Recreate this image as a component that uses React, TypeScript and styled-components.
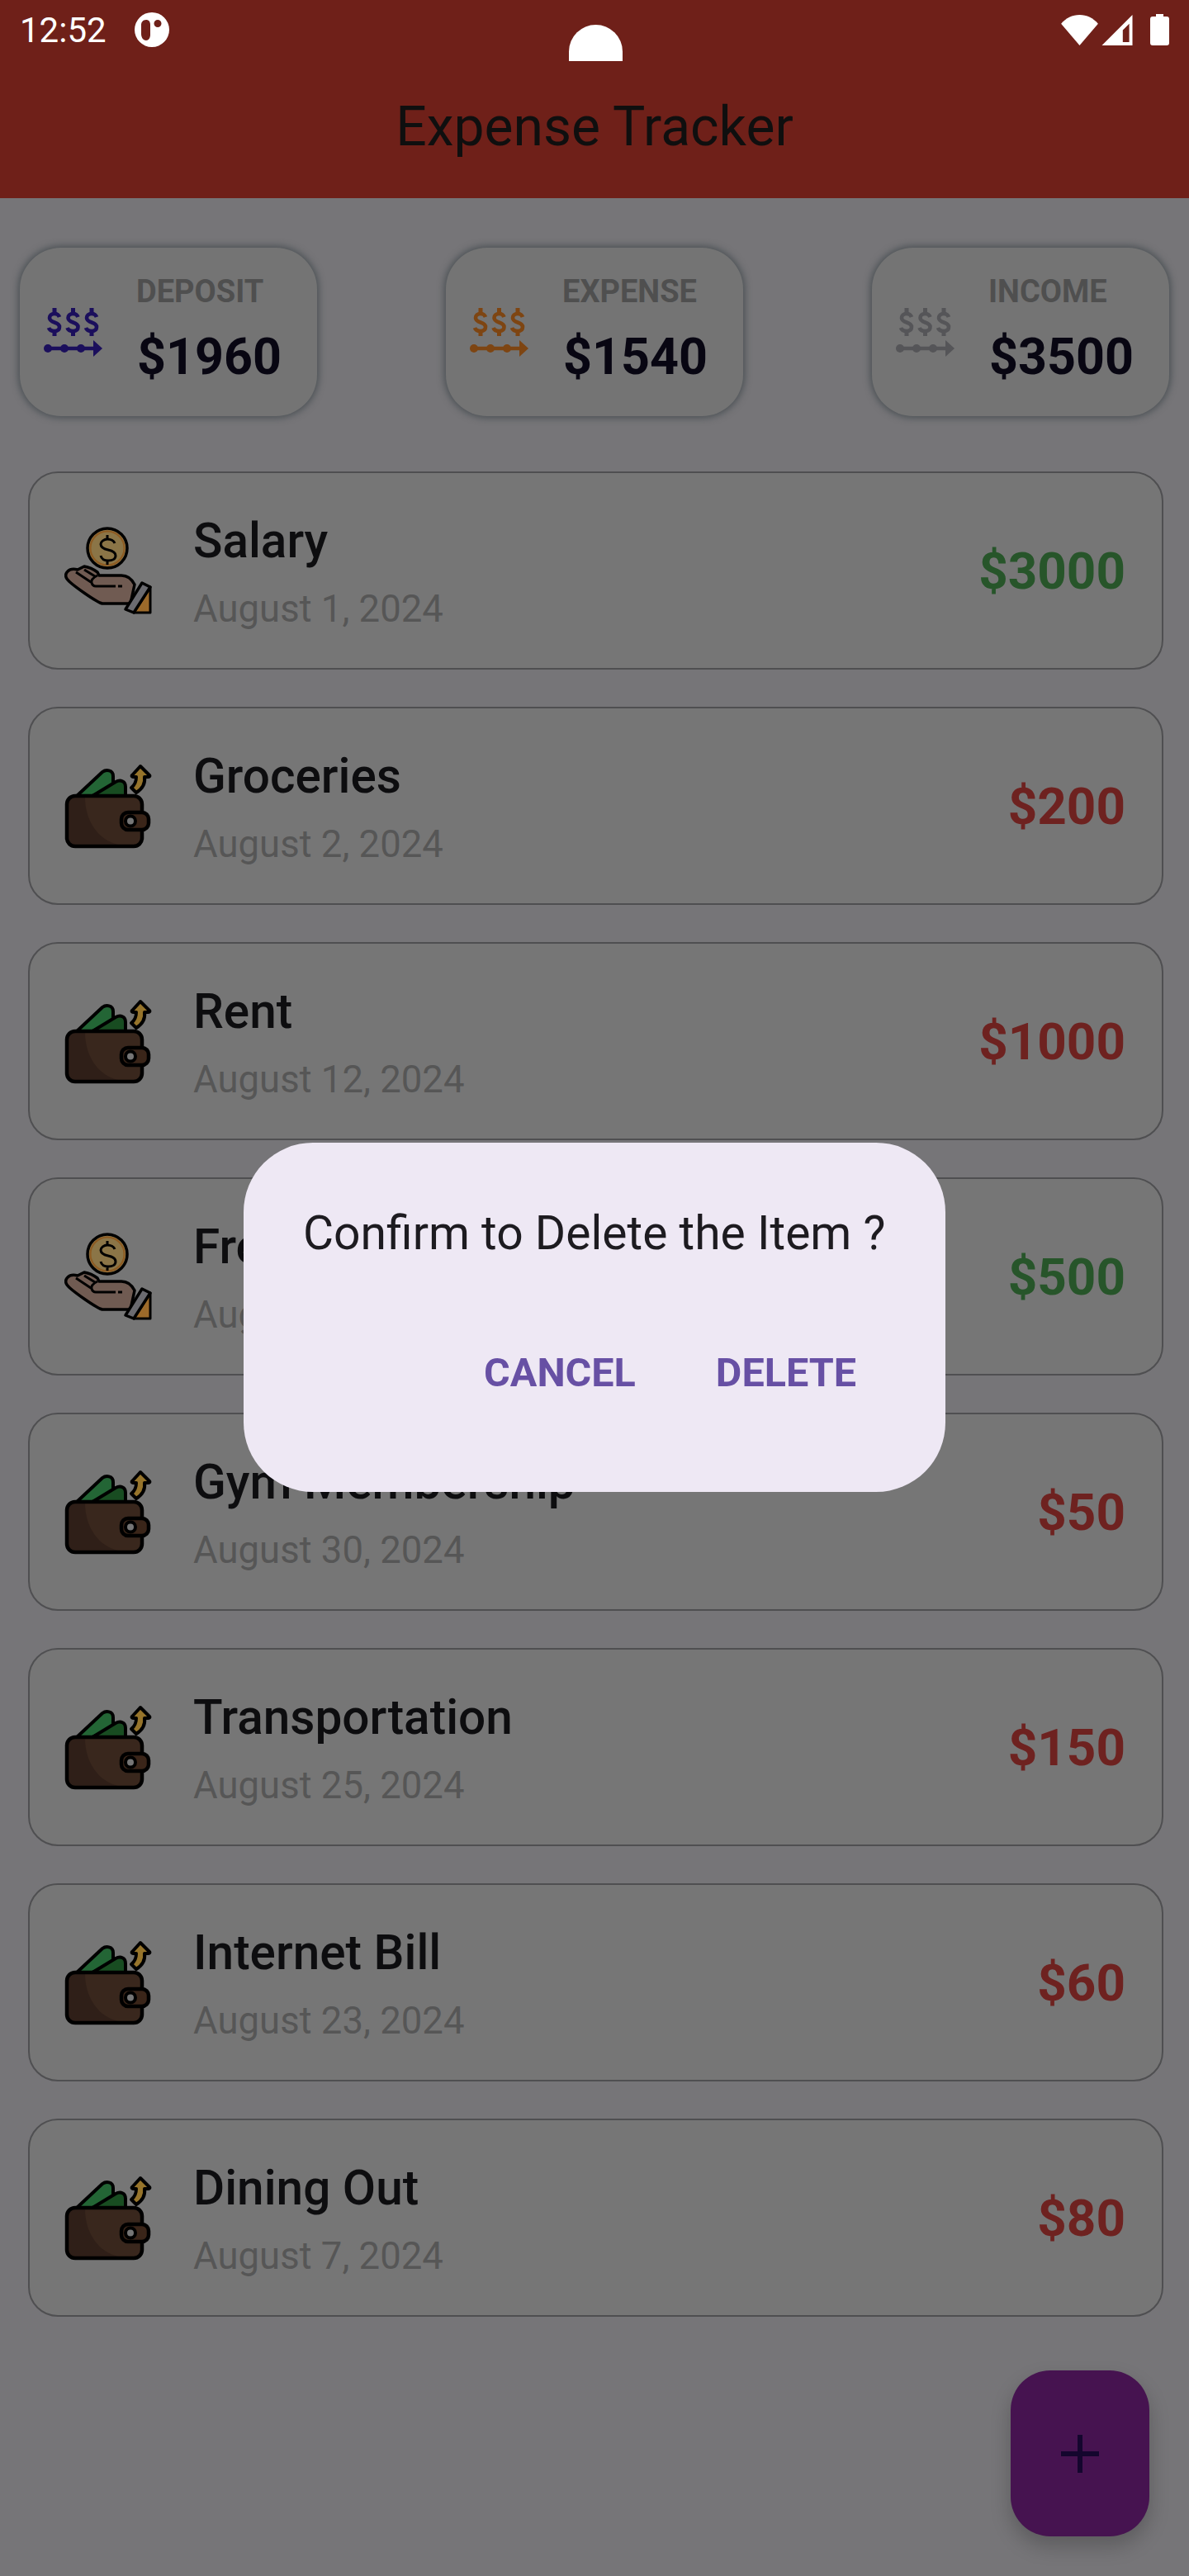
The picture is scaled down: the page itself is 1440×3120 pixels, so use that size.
import React from "react";
import styled, { createGlobalStyle } from "styled-components";

const Global = createGlobalStyle`
  html, body { margin: 0; padding: 0; background: #767578; }
  body { font-family: Roboto, "Noto Sans", sans-serif; }
`;

const Page = styled.div`
  position: relative;
  width: 1440px;
  height: 3120px;
  overflow: hidden;
  background: #767578;
`;

const AppBar = styled.header`
  height: 240px;
  background: #6f2019;
  display: flex;
  flex-direction: column;
`;

const StatusBar = styled.div`
  height: 74px;
  flex: none;
  padding: 0 24px;
  display: flex;
  align-items: center;
  color: #fff;
`;

const Time = styled.span`
  font-size: 42px;
  line-height: 74px;
`;

const StatusLeftIcon = styled.svg`
  width: 42px;
  height: 42px;
  margin-left: 34px;
  margin-top: -2px;
`;

const Cutout = styled.div`
  position: absolute;
  left: 689px;
  top: 30px;
  width: 65px;
  height: 44px;
  background: #fff;
  border-radius: 33px 33px 0 0;
`;

const StatusRight = styled.div`
  margin-left: auto;
  display: flex;
  align-items: center;
  margin-top: -2px;
`;

const SignalIcon = styled.svg`
  margin-left: 4px;
`;

const BatteryIcon = styled.svg`
  margin-left: 21px;
`;

const Title = styled.h1`
  margin: 38px 0 0;
  text-align: center;
  font-size: 66px;
  font-weight: 400;
  line-height: 84px;
  color: #0f0f0f;
`;

const Summary = styled.section`
  display: flex;
  justify-content: space-between;
  padding: 60px 24px 0;
`;

const SummaryCard = styled.div`
  width: 360px;
  height: 204px;
  box-sizing: border-box;
  border-radius: 50px;
  background: #747474;
  box-shadow: 0 0 8px 2px #4a5054;
  display: flex;
  align-items: center;
  padding-left: 29px;
`;

const SummaryIcon = styled.svg`
  width: 72px;
  height: 64px;
  flex: none;
  margin-top: 2px;
`;

const SummaryText = styled.div`
  margin-left: 40px;
  margin-top: -6px;
  display: flex;
  flex-direction: column;
`;

const SummaryLabel = styled.span`
  font-size: 38px;
  line-height: 40px;
  font-weight: 700;
  color: #4f4f4f;
`;

const SummaryAmount = styled.span`
  font-size: 61px;
  line-height: 66px;
  font-weight: 700;
  color: #080612;
  margin-top: 26px;
  margin-left: 1px;
`;

const List = styled.section`
  display: flex;
  flex-direction: column;
  gap: 45px;
  padding: 67px 31px 0 34px;
`;

const Row = styled.article`
  height: 240px;
  box-sizing: border-box;
  border: 2px solid #4f4f51;
  border-radius: 36px;
  background: #767676;
  display: flex;
  align-items: center;
  padding: 0 44px 0 42px;
`;

const RowIcon = styled.svg`
  width: 112px;
  height: 112px;
  flex: none;
`;

const RowText = styled.div`
  margin-left: 44px;
  display: flex;
  flex-direction: column;
  margin-top: 5px;
`;

const RowTitle = styled.span`
  font-size: 58.5px;
  line-height: 64px;
  font-weight: 500;
  color: #0d0d0f;
`;

const RowDate = styled.span`
  font-size: 45.5px;
  line-height: 52px;
  color: #565656;
  margin-top: 25px;
`;

const RowAmount = styled.span<{ $income: boolean }>`
  margin-left: auto;
  font-size: 62px;
  font-weight: 700;
  color: ${(p) => (p.$income ? "#27552a" : "#6e2220")};
`;

const Fab = styled.button`
  position: absolute;
  left: 1224px;
  top: 2871px;
  width: 168px;
  height: 201px;
  border: 0;
  padding: 0;
  border-radius: 48px;
  background: #461350;
  box-shadow: 0 12px 24px rgba(0, 0, 0, 0.22);
  display: flex;
  align-items: center;
  justify-content: center;
`;

const Dialog = styled.div`
  position: absolute;
  left: 295px;
  top: 1384px;
  width: 850px;
  height: 423px;
  box-sizing: border-box;
  border-radius: 84px;
  background: #eee8f4;
  padding: 78px 72px 0;
`;

const DialogText = styled.p`
  margin: 0;
  font-size: 57px;
  line-height: 64px;
  color: #1d1b20;
  white-space: nowrap;
`;

const DialogActions = styled.div`
  display: flex;
  justify-content: flex-end;
  gap: 97px;
  margin-top: 109px;
  margin-right: 36px;
`;

const DialogButton = styled.span`
  font-size: 48.5px;
  line-height: 56px;
  font-weight: 700;
  color: #6750a4;
`;

const DollarArrow = ({ color }: { color: string }) => (
  <SummaryIcon viewBox="0 0 72 64">
    <g fill="none" stroke={color} strokeWidth="4.6" strokeLinecap="butt">
      {[0, 1, 2].map((i) => (
        <g key={i} transform={`translate(${4 + i * 22.5} 1)`}>
          <path d="M15 12c-1-3-3-4-6-4-4 0-6 2-6 5 0 7 12 4 12 11 0 3-2 5-6 5-3 0-6-1-7-4" />
          <path d="M9 1v6M9 29v6" strokeWidth="5" />
        </g>
      ))}
      <path d="M4 51h58" strokeWidth="4.5" />
    </g>
    <g fill={color}>
      <circle cx="5" cy="51" r="5" />
      <circle cx="25" cy="51" r="5" />
      <circle cx="45" cy="51" r="5" />
      <path d="M60 41l11 10-11 10z" />
    </g>
  </SummaryIcon>
);

const WalletIcon = () => (
  <RowIcon viewBox="0 0 112 112">
    <g stroke="#000" strokeWidth="4" strokeLinejoin="round">
      <path d="M15 44L46 15c4-3 13-3 13 5v12L34 44z" fill="#236535" />
      <path d="M34 44l28-17c6-3 12-1 12 6v11z" fill="#184c21" />
      <path d="M92 8L82 19c-1 1 0 2 2 2h3c0 5-2 10-6 13l6 6c8-5 11-12 10-19h4c2 0 3-1 2-2z" fill="#96742b" />
    </g>
    <rect x="3" y="44" width="91" height="61" rx="10" fill="#2f1f18" />
    <path d="M25 46h67v49c0 4-3 8-8 8H65C42 98 25 75 25 46z" fill="#39271d" />
    <rect x="3" y="44" width="91" height="61" rx="10" fill="none" stroke="#000" strokeWidth="4.5" />
    <rect x="69" y="64" width="33" height="21" rx="8" fill="#3a2519" stroke="#000" strokeWidth="4.5" />
    <circle cx="80" cy="74.5" r="6" fill="#767676" stroke="#000" strokeWidth="4" />
  </RowIcon>
);

const HandIcon = () => (
  <RowIcon viewBox="0 0 112 112">
    <circle cx="52" cy="29" r="24" fill="#8b7547" stroke="#000" strokeWidth="3.5" />
    <circle cx="52" cy="29" r="20.5" fill="none" stroke="#8e5b22" strokeWidth="2" />
    <path d="M61 23c-1-3-5-5-9-5s-8 3-8 6c0 4 4 6 9 7s9 3 9 7-4 6-9 6-8-2-9-6M52 13v5M52 44v5" fill="none" stroke="#000" strokeWidth="3" />
    <path d="M4 57c3-3 8-3 12-2l8-4c6 1 12 4 16 7l2 4h27c8 0 13 5 16 11L80 96H46C40 95 8 73 3 66c-2-3-2-6 1-9z" fill="#705b52" stroke="#000" strokeWidth="3.5" strokeLinejoin="round" />
    <path d="M40 62c-6 3-8 6-7 9 1 3 3 4 5 4h24M65 75h5M14 58l18 12M24 55l13 8" fill="none" stroke="#000" strokeWidth="3" />
    <path d="M104 76v31H84z" fill="#9c6a2a" stroke="#000" strokeWidth="3" strokeLinejoin="round" />
    <path d="M94 71l10 5-20 31-10-4z" fill="#6b6b70" stroke="#000" strokeWidth="3.5" strokeLinejoin="round" />
  </RowIcon>
);

const transactions = [
  { title: "Salary", date: "August 1, 2024", amount: "$3000", income: true },
  { title: "Groceries", date: "August 2, 2024", amount: "$200", income: false },
  { title: "Rent", date: "August 12, 2024", amount: "$1000", income: false },
  { title: "Freelance", date: "August 15, 2024", amount: "$500", income: true },
  { title: "Gym Membership", date: "August 30, 2024", amount: "$50", income: false },
  { title: "Transportation", date: "August 25, 2024", amount: "$150", income: false },
  { title: "Internet Bill", date: "August 23, 2024", amount: "$60", income: false },
  { title: "Dining Out", date: "August 7, 2024", amount: "$80", income: false },
];

const summaries = [
  { label: "DEPOSIT", amount: "$1960", color: "#1b0f5c" },
  { label: "EXPENSE", amount: "$1540", color: "#7e4512" },
  { label: "INCOME", amount: "$3500", color: "#555558" },
];

export default function App() {
  return (
    <Page>
      <Global />
      <AppBar>
        <StatusBar>
          <Time>12:52</Time>
          <StatusLeftIcon viewBox="0 0 42 42">
            <path
              fillRule="evenodd"
              fill="#fff"
              d="M21 0a21 21 0 1 1 0 42a21 21 0 0 1 0-42zM14 9c-4 0-6 3-6 6v11c0 5 3 8 6 8s5-3 5-7V15c0-4-2-6-5-6zM28 9a4.5 4.5 0 1 0 0 9a4.5 4.5 0 0 0 0-9z"
            />
          </StatusLeftIcon>
          <StatusRight>
            <svg width="45" height="37" viewBox="0 0 46 38">
              <path d="M0 11C6 4 14 0 23 0s17 4 23 11L23 38z" fill="#fff" />
            </svg>
            <SignalIcon width="38" height="37" viewBox="0 0 38 38">
              <path fillRule="evenodd" d="M38 0v38H0zM34 11L26 19v15h8z" fill="#fff" />
            </SignalIcon>
            <BatteryIcon width="23" height="38" viewBox="0 0 23 38">
              <path d="M7 0h9v3h4c2 0 3 1 3 3v29c0 2-1 3-3 3H3c-2 0-3-1-3-3V6c0-2 1-3 3-3h4z" fill="#fff" />
            </BatteryIcon>
          </StatusRight>
        </StatusBar>
        <Title>Expense Tracker</Title>
      </AppBar>
      <Cutout />
      <Summary>
        {summaries.map((s) => (
          <SummaryCard key={s.label}>
            <DollarArrow color={s.color} />
            <SummaryText>
              <SummaryLabel>{s.label}</SummaryLabel>
              <SummaryAmount>{s.amount}</SummaryAmount>
            </SummaryText>
          </SummaryCard>
        ))}
      </Summary>
      <List>
        {transactions.map((t) => (
          <Row key={t.title}>
            {t.income ? <HandIcon /> : <WalletIcon />}
            <RowText>
              <RowTitle>{t.title}</RowTitle>
              <RowDate>{t.date}</RowDate>
            </RowText>
            <RowAmount $income={t.income}>{t.amount}</RowAmount>
          </Row>
        ))}
      </List>
      <Fab aria-label="Add">
        <svg width="46" height="46" viewBox="0 0 46 46">
          <path d="M23 0v46M0 23h46" stroke="#14062e" strokeWidth="6" />
        </svg>
      </Fab>
      <Dialog>
        <DialogText>Confirm to Delete the Item ?</DialogText>
        <DialogActions>
          <DialogButton>CANCEL</DialogButton>
          <DialogButton>DELETE</DialogButton>
        </DialogActions>
      </Dialog>
    </Page>
  );
}
